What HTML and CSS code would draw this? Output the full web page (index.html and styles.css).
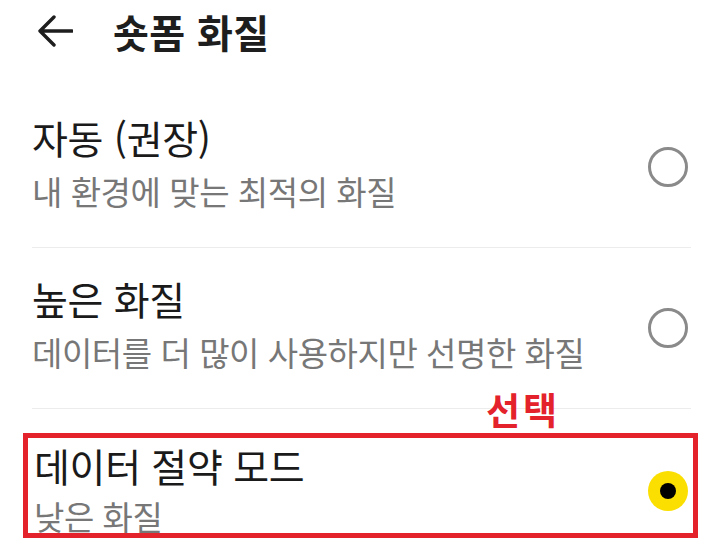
FILE: index.html
```html
<!DOCTYPE html>
<html lang="ko">
<head>
    <meta charset="UTF-8">
    <meta name="viewport" content="width=device-width, initial-scale=1.0">
    <title>숏폼 화질</title>
    <link rel="stylesheet" href="styles.css">
</head>
<body>
    <div class="screen">
        <!-- Top bar -->
        <div class="top-bar">
            <svg class="back-icon" width="36" height="34" viewBox="0 0 36 34">
                <path d="M35 17 H3 M17 3 L3 17 L17 31" fill="none" stroke="#1e1e1e" stroke-width="3.4" stroke-linecap="round" stroke-linejoin="round"/>
            </svg>
            <h1 class="page-title">숏폼 화질</h1>
        </div>

        <!-- Quality options -->
        <div class="options">
            <div class="option">
                <div class="option-text">
                    <div class="option-title">자동 (권장)</div>
                    <div class="option-desc">내 환경에 맞는 최적의 화질</div>
                </div>
                <span class="radio"></span>
            </div>
            <div class="option">
                <div class="option-text">
                    <div class="option-title">높은 화질</div>
                    <div class="option-desc">데이터를 더 많이 사용하지만 선명한 화질</div>
                </div>
                <span class="radio"></span>
            </div>
            <div class="option selected">
                <span class="pick-label">선택</span>
                <div class="option-text">
                    <div class="option-title">데이터 절약 모드</div>
                    <div class="option-desc">낮은 화질</div>
                </div>
                <span class="radio checked"></span>
            </div>
        </div>
    </div>
</body>
</html>
```

FILE: styles.css
```css
body {
    margin: 0;
    background-color: #ffffff;
    font-family: "Noto Sans CJK KR", "Noto Sans", sans-serif;
    color: #1e1e1e;
}
.screen {
    width: 720px;
    height: 547px;
    overflow: hidden;
}
.top-bar {
    display: flex;
    align-items: center;
    height: 62px;
    padding-left: 37px;
}
.back-icon {
    display: block;
}
.page-title {
    margin: 0 0 0 40px;
    font-size: 39px;
    font-weight: 700;
    letter-spacing: 0.4px;
    line-height: 1;
}
.options {
    display: flex;
    flex-direction: column;
    padding-top: 25px;
}
.option {
    display: flex;
    align-items: center;
    justify-content: space-between;
    margin: 0 29px 0 32px;
    height: 161px;
    border-bottom: 1px solid #ececec;
    box-sizing: border-box;
}
.option-text {
    display: flex;
    flex-direction: column;
    gap: 12px;
    margin-bottom: 8px;
}
.option-title {
    font-size: 39px;
    letter-spacing: -0.3px;
    line-height: 44px;
    color: #1a1a1a;
}
.option-desc {
    font-size: 33px;
    letter-spacing: -0.45px;
    line-height: 40px;
    color: #777777;
}
.radio {
    width: 40px;
    height: 40px;
    margin-right: 3px;
    border: 3px solid #8a8a8a;
    border-radius: 50%;
    box-sizing: border-box;
    flex-shrink: 0;
}
.radio.checked {
    border: none;
    background-color: #fbdf00;
    display: flex;
    align-items: center;
    justify-content: center;
}
.radio.checked::after {
    content: "";
    width: 16px;
    height: 16px;
    border-radius: 50%;
    background-color: #000000;
}
.option.selected {
    position: relative;
    margin: 24px 22px 0 23px;
    height: 105px;
    border: 5px solid #e4222b;
    padding: 0 5px 0 6px;
    align-items: flex-start;
}
.option.selected .option-text {
    gap: 9px;
    padding-top: 5px;
    margin-bottom: 0;
}
.option.selected .radio {
    margin: 33px 0 0 0;
}
.pick-label {
    position: absolute;
    left: 458px;
    top: -47px;
    font-size: 37px;
    font-weight: 700;
    letter-spacing: 3px;
    color: #e4222b;
    line-height: 1;
}
```
